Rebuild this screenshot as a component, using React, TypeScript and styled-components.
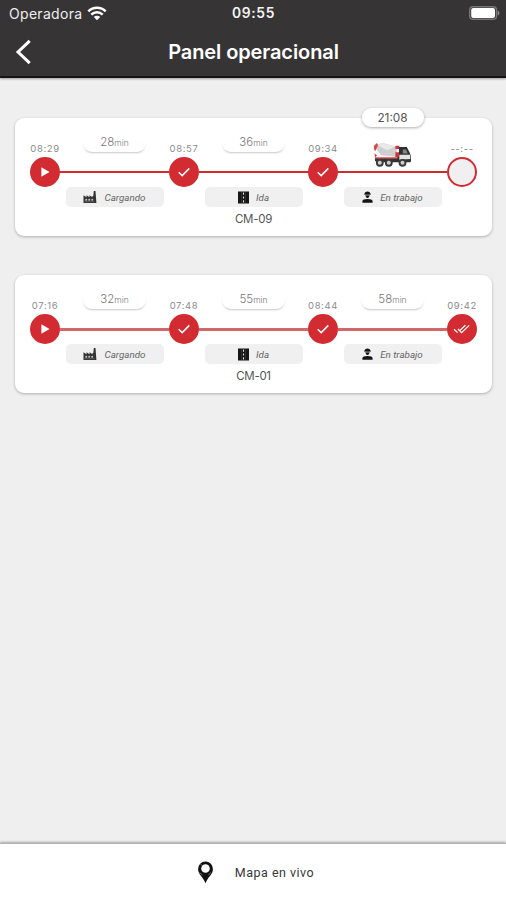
import React from "react";
import styled, { createGlobalStyle } from "styled-components";

const GlobalStyle = createGlobalStyle`
  * { box-sizing: border-box; }
  html, body { margin: 0; background: #efefef; }
  body { font-family: Inter, Roboto, "Liberation Sans", sans-serif; }
`;

const RED = "#d22b31";

const Screen = styled.div`
  display: flex;
  flex-direction: column;
  height: 900px;
  overflow: hidden;
  background: #efefef;
`;

const Header = styled.header`
  flex: none;
  height: 78px;
  background: #373435;
  border-bottom: 2px solid #161415;
  color: #fff;
  box-shadow: 0 1px 2px rgba(0, 0, 0, 0.35);
`;

const StatusBar = styled.div`
  display: grid;
  grid-template-columns: 1fr auto 1fr;
  align-items: center;
  height: 26px;
  padding: 0 6px 0 9px;
`;

const Carrier = styled.div`
  display: flex;
  align-items: center;
  gap: 5px;
  font-size: 14px;
  letter-spacing: 0.3px;
  color: #eeeeee;
`;

const Clock = styled.div`
  margin-left: -2px;
  font-size: 13.8px;
  font-weight: 600;
  letter-spacing: 0.7px;
  color: #f4f4f4;
`;

const BatterySlot = styled.div`
  display: flex;
  justify-content: flex-end;
`;

const NavBar = styled.div`
  display: grid;
  grid-template-columns: 60px 1fr 60px;
  align-items: center;
  height: 51px;
`;

const BackButton = styled.button`
  display: flex;
  padding: 0 0 0 15px;
  border: 0;
  background: none;
  color: #fff;
`;

const Title = styled.h1`
  margin: 0;
  padding-left: 1px;
  text-align: center;
  font-size: 20px;
  font-weight: 600;
  letter-spacing: -0.1px;
  white-space: nowrap;
`;

const TripList = styled.main`
  flex: 1;
  display: flex;
  flex-direction: column;
  gap: 39px;
  padding: 40px 14px 0 15px;
`;

const Card = styled.section`
  height: 118px;
  padding: 14px 15px 0;
  border-radius: 9px;
  background: #fff;
  box-shadow: 0 1px 3px rgba(0, 0, 0, 0.28);
`;

const Track = styled.div`
  display: grid;
  grid-template-columns: 30px 109px 30px 109px 30px 109px 30px;
  grid-template-rows: 25px 30px 20px;
  grid-auto-flow: column;
`;

const StopTime = styled.time`
  display: flex;
  justify-content: center;
  padding-top: 11px;
  font-size: 9.5px;
  line-height: 12px;
  letter-spacing: 0.6px;
  color: #8c8c8c;
  white-space: nowrap;
`;

const StopDot = styled.div<{ $pending?: boolean }>`
  display: flex;
  align-items: center;
  justify-content: center;
  width: 30px;
  height: 30px;
  border-radius: 50%;
  border: 2px solid ${RED};
  background: ${(p) => (p.$pending ? "#f0f0f0" : RED)};
`;

const Spacer = styled.div``;

const LegTop = styled.div`
  position: relative;
  display: flex;
  justify-content: center;
`;

const Duration = styled.div`
  display: flex;
  align-items: baseline;
  justify-content: center;
  width: 63px;
  height: 20px;
  border-radius: 9px;
  background: #fff;
  box-shadow: 0 2px 2px -1px rgba(0, 0, 0, 0.22);
  font-size: 11.5px;
  line-height: 21px;
  font-weight: 300;
  color: #777;
`;

const Unit = styled.span`
  font-size: 8.5px;
  color: #777;
`;

const LiveTime = styled.div`
  position: absolute;
  top: -24px;
  width: 62px;
  height: 19px;
  border-radius: 9px;
  background: #fff;
  box-shadow: 0 1px 3px rgba(0, 0, 0, 0.32);
  font-size: 11.8px;
  line-height: 20px;
  text-align: center;
  color: #555;
`;

const Line = styled.div<{ $done?: boolean }>`
  align-self: center;
  height: ${(p) => (p.$done ? 3 : 2)}px;
  background: ${(p) => (p.$done ? "#d0686b" : "#cf2b2d")};
`;

const Phase = styled.div`
  display: flex;
  align-items: center;
  justify-content: center;
  gap: 7px;
  justify-self: center;
  width: 98px;
  height: 20px;
  border-radius: 5px;
  background: #f0f0f0;
  color: #222;
`;

const PhaseName = styled.span`
  font-family: Roboto, sans-serif;
  font-size: 9.8px;
  font-style: italic;
  color: #666;
  white-space: nowrap;
`;

const Truck = styled.svg`
  position: absolute;
  top: 10px;
  width: 39px;
  height: 25px;
`;

const Vehicle = styled.div`
  padding-top: 5px;
  text-align: center;
  font-size: 11.5px;
  line-height: 15px;
  letter-spacing: -0.3px;
  color: #555;
`;

const Footer = styled.button`
  flex: none;
  display: flex;
  align-items: center;
  justify-content: center;
  gap: 21px;
  height: 57px;
  padding: 0 0 0 5px;
  border: 0;
  border-top: 1px solid #b4b4b4;
  background: #fff;
  box-shadow: 0 -1px 2px rgba(0, 0, 0, 0.3);
  font-family: Roboto, sans-serif;
  font-size: 12.5px;
  letter-spacing: 0.5px;
  color: #383838;
`;

const WifiIcon = () => (
  <svg width="20" height="15" viewBox="0 0 20 15" fill="none" stroke="#fff" strokeWidth="2.5">
    <path d="M1.3 5.3a12.4 12.4 0 0 1 17.4 0M4.3 8.6a8.2 8.2 0 0 1 11.4 0" />
    <path d="M10 14.3 6.8 11a4.6 4.6 0 0 1 6.4 0z" fill="#fff" stroke="none" />
  </svg>
);

const BatteryIcon = () => (
  <svg width="31" height="14" viewBox="0 0 31 14">
    <rect x="0.7" y="0.7" width="26.8" height="12.6" rx="3.3" fill="none" stroke="#777576" strokeWidth="1.4" />
    <rect x="2.2" y="2" width="23.8" height="10" rx="2" fill="#fff" />
    <path d="M28.6 4.4c2.400 1 2.400 4.200 0 5.200z" fill="#8b898a" />
  </svg>
);

const BackIcon = () => (
  <svg width="18" height="26" viewBox="0 0 18 26" fill="none" stroke="#fff" strokeWidth="3">
    <path d="M14.700 1.800 3 13l11.700 11.200" />
  </svg>
);

const PlayIcon = () => (
  <svg width="14" height="14" viewBox="0 0 14 14">
    <path d="M3.4 2.3v9.4L11.5 7z" fill="#fff" />
  </svg>
);

const CheckIcon = () => (
  <svg width="14" height="12" viewBox="0 0 14 12" fill="none" stroke="#fff" strokeWidth="1.5">
    <path d="m1.7 6.2 3.5 3.4L12.3 2.4" />
  </svg>
);

const DoubleCheckIcon = () => (
  <svg width="18" height="12" viewBox="0 0 18 12" fill="none" stroke="#fff" strokeWidth="1.3">
    <path d="m1 6.2 3.6 3.4M5 6l3.6 3.6 7.6-7.2M6.8 7.6l5.6-5.4" />
  </svg>
);

const FactoryIcon = () => (
  <svg width="14" height="14" viewBox="0 0 14 14">
    <path d="M.5 13V5.2l3 2V5.2l3 2V5.2l3 2V6h.8l.5-5h1.7l.9 12z" fill="#333" />
    <path d="M2.5 9h1.5v1.5H2.5zM5.5 9H7v1.5H5.5zM8.5 9H10v1.5H8.5zM1.5 11.7h10" fill="#ddd" stroke="#999" strokeWidth=".4" />
  </svg>
);

const RoadIcon = () => (
  <svg width="11" height="13" viewBox="0 0 10 13" preserveAspectRatio="none">
    <path d="M0 .5h10v12H0z" fill="#151515" />
    <path d="M5 1.5v2.2M5 5.4v2.2M5 9.3v2.2" stroke="#ddd" strokeWidth="1" />
    <path d="M3.200 1v11M6.800 1v11" stroke="#555" strokeWidth=".4" />
  </svg>
);

const WorkerIcon = () => (
  <svg width="11" height="12" viewBox="0 0 11 12" fill="#151515">
    <path d="M2.600 2.700C2.900 1.300 4 .4 5.500.4s2.600.9 2.900 2.300h.6v.9H2v-.9z" />
    <path d="M3.500 3.500h4c0 2-.6 3.500-2 3.500s-2-1.500-2-3.500zM.4 11.700V10c0-1.100 2-2 5.100-2s5.100.9 5.100 2v1.700z" />
    <path d="M4 4.400h3" stroke="#aaa" strokeWidth=".6" />
  </svg>
);

const MixerTruck = () => (
  <Truck viewBox="0 0 39 25">
    <path d="M2 16.200h23v3H2z" fill="#333" />
    <path d="M2 15.300h24v1.200H2z" fill="#d33" />
    <path d="M3.800 3.300 9.500.8 23 4.800l1.200 3.700-1 6.300L8 13.200 3.900 8z" fill="#cfcfcf" />
    <path d="m4.800 3.300 4.800-2.300L22 4.800l-8 3.400z" fill="#e9e9e9" />
    <path d="m.8 4 3-2.900 1.300 1.800L2.800 8.500H1.300z" fill="#d9464b" />
    <path d="M22.400 3.800h3.800v3.100h-3.800zM22.400 10.300h3.800V15h-3.800zM1.600 11.200l2.400 2.400L2 15.200z" fill="#d2333a" />
    <path d="M26 5h7.800l2.800 5.500 1.400 3.500v5.500H24.500v-4.700H26z" fill="#303030" />
    <path d="M29.800 7.500h3.200l1.800 4h-5z" fill="#7f8488" />
    <path d="M26.300 12.800h11v4.200l-11 .8z" fill="#e4e4e4" />
    <path d="M3 18.300h34.500v2H3z" fill="#333" />
    {[6.8, 15.8, 29.5].map((cx) => (
      <g key={cx}>
        <circle cx={cx} cy="20.800" r="3.900" fill="#3a3a3a" />
        <circle cx={cx} cy="20.800" r="2" fill="#cfcfcf" />
      </g>
    ))}
  </Truck>
);

const PinIcon = () => (
  <svg width="17" height="23" viewBox="0 0 17 23">
    <path d="M8.500 .5a7.500 7.500 0 0 0-7.400 7.800c0 5 4.900 7.700 7.400 13.900 2.500-6.200 7.400-8.900 7.400-13.900A7.500 7.500 0 0 0 8.500.5z" fill="#111" />
    <circle cx="8.500" cy="7.500" r="4.300" fill="#fff" />
    <path d="m2.500 11.500 3 2.500M3.300 3l1.800 1.500M13.700 11.500l-2.200 2.700" stroke="#888" strokeWidth=".8" />
  </svg>
);

type Mark = "play" | "check" | "double" | "pending";

const marks: Record<Mark, React.ReactNode> = {
  play: <PlayIcon />,
  check: <CheckIcon />,
  double: <DoubleCheckIcon />,
  pending: null,
};

const phases = [
  { name: "Cargando", icon: <FactoryIcon /> },
  { name: "Ida", icon: <RoadIcon /> },
  { name: "En trabajo", icon: <WorkerIcon /> },
];

interface Trip {
  vehicle: string;
  times: string[];
  marks: Mark[];
  minutes: number[];
  live?: string;
}

const trips: Trip[] = [
  {
    vehicle: "CM-09",
    times: ["08:29", "08:57", "09:34", "--:--"],
    marks: ["play", "check", "check", "pending"],
    minutes: [28, 36],
    live: "21:08",
  },
  {
    vehicle: "CM-01",
    times: ["07:16", "07:48", "08:44", "09:42"],
    marks: ["play", "check", "check", "double"],
    minutes: [32, 55, 58],
  },
];

const TripCard = ({ trip }: { trip: Trip }) => (
  <Card>
    <Track>
      {trip.times.map((time, i) => (
        <React.Fragment key={i}>
          <StopTime>{time}</StopTime>
          <StopDot $pending={trip.marks[i] === "pending"}>{marks[trip.marks[i]]}</StopDot>
          <Spacer />
          {i < phases.length && (
            <>
              <LegTop>
                {trip.minutes[i] !== undefined ? (
                  <Duration>
                    {trip.minutes[i]}
                    <Unit>min</Unit>
                  </Duration>
                ) : (
                  <>
                    <LiveTime>{trip.live}</LiveTime>
                    <MixerTruck />
                  </>
                )}
              </LegTop>
              <Line $done={!trip.live} />
              <Phase>
                {phases[i].icon}
                <PhaseName>{phases[i].name}</PhaseName>
              </Phase>
            </>
          )}
        </React.Fragment>
      ))}
    </Track>
    <Vehicle>{trip.vehicle}</Vehicle>
  </Card>
);

export default function App() {
  return (
    <Screen>
      <GlobalStyle />
      <Header>
        <StatusBar>
          <Carrier>
            Operadora
            <WifiIcon />
          </Carrier>
          <Clock>09:55</Clock>
          <BatterySlot>
            <BatteryIcon />
          </BatterySlot>
        </StatusBar>
        <NavBar>
          <BackButton aria-label="Volver">
            <BackIcon />
          </BackButton>
          <Title>Panel operacional</Title>
        </NavBar>
      </Header>
      <TripList>
        {trips.map((trip) => (
          <TripCard key={trip.vehicle} trip={trip} />
        ))}
      </TripList>
      <Footer>
        <PinIcon />
        Mapa en vivo
      </Footer>
    </Screen>
  );
}
